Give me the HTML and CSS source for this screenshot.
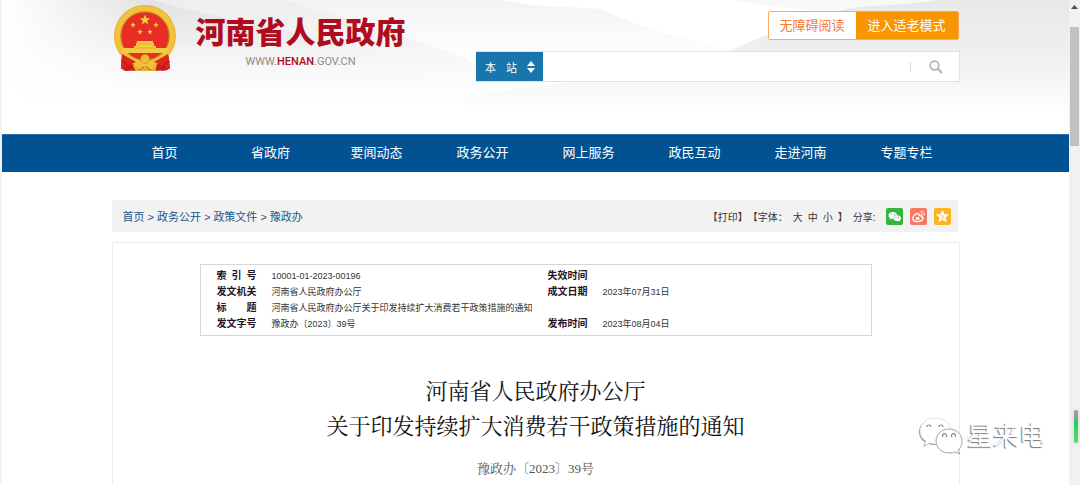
FILE: index.html
```html
<!DOCTYPE html>
<html lang="zh-CN">
<head>
<meta charset="utf-8">
<title>河南省人民政府</title>
<link rel="stylesheet" href="styles.css">
</head>
<body>
<div class="window">
<div class="page">
  <header class="header">
    <svg class="waves" viewBox="0 0 1067 134" preserveAspectRatio="none" aria-hidden="true">
      <defs>
        <linearGradient id="g1" gradientUnits="userSpaceOnUse" x1="180" y1="0" x2="180" y2="95"><stop offset="0" stop-color="#e2e2e2"/><stop offset="0.4" stop-color="#eeeeee"/><stop offset="1" stop-color="#fff" stop-opacity="0"/></linearGradient>
        <linearGradient id="g2" gradientUnits="userSpaceOnUse" x1="0" y1="0" x2="0" y2="105"><stop offset="0" stop-color="#ebebeb"/><stop offset="1" stop-color="#fff"/></linearGradient>
        <linearGradient id="g3" gradientUnits="userSpaceOnUse" x1="0" y1="0" x2="0" y2="115"><stop offset="0" stop-color="#e8e8e8"/><stop offset="0.5" stop-color="#f0f0f0"/><stop offset="1" stop-color="#fff"/></linearGradient>
        <linearGradient id="g4" x1="0" y1="0" x2="1" y2="0"><stop offset="0" stop-color="#fff"/><stop offset="0.14" stop-color="#fff" stop-opacity="0"/></linearGradient>
        <linearGradient id="g5" gradientUnits="userSpaceOnUse" x1="0" y1="0" x2="0" y2="60"><stop offset="0" stop-color="#f3f3f3"/><stop offset="1" stop-color="#fff"/></linearGradient>
      </defs>
      <path d="M0 0H1067V134H0Z" fill="url(#g2)" opacity=".35"/>
      <path d="M0 0H285C340 18 400 34 460 56L560 134H0Z" fill="url(#g2)" opacity=".8"/>
      <path d="M0 0H150C210 18 290 28 360 48C410 64 450 84 490 105L0 134Z" fill="url(#g1)"/>
      <path d="M285 0H500C540 8 570 6 600 9C630 18 640 28 690 38L730 50L700 70H490C440 45 350 22 285 0Z" fill="url(#g5)"/>
      <path d="M500 0H730C770 8 810 11 845 11C800 22 770 38 727 50C680 36 650 34 600 9C570 6 540 8 500 0Z" fill="#fff"/>
      <path d="M727 52C780 26 830 8 870 6C910 4 920 2 935 0H1067V134H480L460 100C500 90 530 86 590 81L680 70Z" fill="url(#g3)"/>
      <path d="M0 0H1067V134H0Z" fill="url(#g4)"/>
    </svg>
    <div class="container header-inner">
      <a class="brand" href="#">
        <svg class="emblem" viewBox="0 0 64 68" aria-hidden="true">
          <defs>
            <radialGradient id="gold"><stop offset="0.75" stop-color="#d99a20"/><stop offset="0.88" stop-color="#f8ce4c"/><stop offset="1" stop-color="#e5ab2b"/></radialGradient>
            <path id="star" d="M0-5L1.3-1.6H4.8L2 .6L3 4L0 2L-3 4L-2 .6L-4.8-1.6H-1.3Z"/>
          </defs>
          <path d="M9 46L8 63C12 68 17 65 22 66H43C48 64 52 68 57 63L55 46Z" fill="#cf1d1b"/>
          <circle cx="32" cy="31" r="31" fill="url(#gold)"/>
          <circle cx="32" cy="31" r="27.500" fill="none" stroke="#f3c23d" stroke-width="5" stroke-dasharray="4 1"/>
          <circle cx="32" cy="31" r="24" fill="#e82d24" stroke="#bd7b20" stroke-width="1"/>
          <g fill="#f5cb45">
            <use href="#star" transform="translate(32 15) scale(1.1)"/>
            <use href="#star" transform="translate(20 20) scale(.58)"/><use href="#star" transform="translate(43 20) scale(.58)"/>
            <use href="#star" transform="translate(27 27) scale(.58)"/><use href="#star" transform="translate(37 27) scale(.58)"/>
            <path d="M24 36H40V38H41V41H43V43H55L53 48H11L9 43H21V41H23V38H24Z"/>
          </g>
          <path d="M22 43H42M24 39H40" stroke="#d9a12c" stroke-width=".7"/>
          <path d="M9 49L23 57L8 64ZM55 49L41 57L57 64Z" fill="#df251e"/>
          <path d="M20 61Q32 50 44 61L41 64H36Q32 57 28 64H22Z" fill="#f0bf3c"/>
          <circle cx="32" cy="54" r="4.500" fill="#f1bd36" stroke="#c88c22" stroke-dasharray="2 1"/>
          <path d="M8 56Q13 57 16 63M57 56Q51 58 49 64" fill="none" stroke="#a61217"/>
          <path d="M22 60L27 65L32 61L37 65L43 60V66H22Z" fill="#e4b033"/>
        </svg>
        <span class="brand-text">
          <span class="brand-name">河南省人民政府</span>
          <span class="brand-url">WWW.<b>HENAN</b>.GOV.CN</span>
        </span>
      </a>
      <div class="tools">
        <div class="modes"><button class="mode">无障碍阅读</button><button class="mode mode-on">进入适老模式</button></div>
        <form class="search">
          <button type="button" class="scope"><span>本</span><span>站</span>
            <svg width="8" height="12" viewBox="0 0 8 12" aria-hidden="true"><path d="M4 0L8 5H0ZM0 7H8L4 12Z" fill="#fff"/></svg>
          </button>
          <input class="query" type="text" aria-label="搜索">
          <span class="divider"></span>
          <button type="button" class="go" aria-label="搜索">
            <svg width="14" height="14" viewBox="0 0 14 14" aria-hidden="true"><circle cx="5.500" cy="5.500" r="4.300" fill="none" stroke="#b5b5b5" stroke-width="1.800"/><path d="M8.800 8.800L13 13" stroke="#b5b5b5" stroke-width="2.200"/></svg>
          </button>
        </form>
      </div>
    </div>
  </header>
  <nav class="nav"><div class="container nav-inner">
    <a href="#">首页</a><a href="#">省政府</a><a href="#">要闻动态</a><a href="#">政务公开</a><a href="#">网上服务</a><a href="#">政民互动</a><a href="#">走进河南</a><a href="#">专题专栏</a>
  </div></nav>
  <main class="container">
    <div class="bar">
      <div class="crumbs"><a href="#">首页</a><span>&gt;</span><a href="#">政务公开</a><span>&gt;</span><a href="#">政策文件</a><span>&gt;</span><a href="#">豫政办</a></div>
      <div class="actions">
        <button class="plain">【打印】</button>
        <span class="sizes">【字体：<button class="plain">大</button><button class="plain">中</button><button class="plain">小</button>】</span>
        <span class="share-label">分享:</span>
        <div class="share">
          <a class="wechat" href="#" aria-label="微信"><svg viewBox="0 0 17 17"><path d="M7 4C4.300 4 2.500 5.600 2.500 7.500C2.500 8.600 3.100 9.500 4 10.100L3.600 11.500L5.200 10.700L7 11C7 8.500 8.500 7 11.200 7C10.800 5.200 9.200 4 7 4Z" fill="#fff"/><path d="M11.200 7.200C9 7.200 7.400 8.500 7.400 10.200S9 13.100 11.200 13.100L12.500 12.900L14 13.600L13.600 12.400C14.600 11.900 15 11.200 15 10.200C15 8.500 13.300 7.200 11.200 7.200Z" fill="#fff"/><path d="M5 6.200h1M8 6.200h1M9.400 9.400h1M12 9.400h1" stroke="#31b53c"/></svg></a>
          <a class="weibo" href="#" aria-label="微博"><svg viewBox="0 0 17 17" fill="none" stroke="#fff"><path d="M7.500 5.300C5 6 2.800 8.500 2.800 10.500C2.800 12.600 5 13.600 7.500 13.600C10.500 13.600 13 12 13 10.200C13 9.200 12.200 8.700 11.300 8.500C11.500 7.300 10.500 7 9 7.600C9.200 6 8.800 5.200 7.500 5.300Z" stroke-width="1.300"/><ellipse cx="7.600" cy="10.600" rx="2" ry="1.500" fill="#fff" stroke="none"/><path d="M10.500 3.500C13 3 15 5 14.200 7.600M10.800 5.600C12.200 5.500 12.800 6.400 12.500 7.400"/></svg></a>
          <a class="qzone" href="#" aria-label="QQ空间"><svg viewBox="0 0 17 17"><path d="M8.500 2.500L10.200 6.400L14.500 6.800L11.300 9.600L12.300 13.800L8.500 11.600L4.700 13.800L5.700 9.600L2.500 6.800L6.800 6.400Z" fill="#fff" stroke="#fff" stroke-width=".6"/><path d="M6.800 7.800H10L7.400 10.300H10.400" fill="none" stroke="#fbb51b" stroke-width=".6"/></svg></a>
        </div>
      </div>
    </div>
    <article class="article">
      <table class="meta">
        <colgroup><col class="c-key"><col class="c-wide"><col class="c-key"><col></colgroup>
        <tr><th><span class="key"><i>索</i><i>引</i><i>号</i></span></th><td>10001-01-2023-00196</td><th>失效时间</th><td></td></tr>
        <tr><th>发文机关</th><td>河南省人民政府办公厅</td><th>成文日期</th><td>2023年07月31日</td></tr>
        <tr><th><span class="key"><i>标</i><i>题</i></span></th><td colspan="3">河南省人民政府办公厅关于印发持续扩大消费若干政策措施的通知</td></tr>
        <tr><th>发文字号</th><td>豫政办〔2023〕39号</td><th>发布时间</th><td>2023年08月04日</td></tr>
      </table>
      <h1 class="title">河南省人民政府办公厅<br>关于印发持续扩大消费若干政策措施的通知</h1>
      <p class="docno">豫政办〔2023〕39号</p>
    </article>
  </main>
</div>
<div class="scroll" aria-hidden="true"><svg width="7" height="4" viewBox="0 0 7 4"><path d="M3.500 0L7 4H0Z" fill="#505050"/></svg><div class="thumb"></div></div>
<div class="meter"></div>
<div class="watermark">
  <svg width="44" height="38" viewBox="0 0 44 38" aria-hidden="true">
    <g fill="#999"><path d="M15 1C6 1 0 7 0 14C0 18 2 22 6 24L4 29L10 26Q15 28 21 26L31 12C29 5 23 1 15 1Z"/></g>
    <path d="M16 0C7 0 1 6 1 13C1 18 3 21 7 23L5 28L11 25Q16 27 22 25L32 11C30 4 24 0 16 0Z" fill="#fff" stroke="#bbb" stroke-width=".4"/>
    <path d="M30 11C22 11 17 17 17 23C17 30 23 35 30 35Q34 35 36 34L41 36L39 32C42 30 43 27 43 23C43 17 38 11 30 11Z" fill="#fff" stroke="#999" stroke-width=".9"/>
    <g fill="none" stroke="#888" stroke-width="1.200"><path d="M8 9A2 2 0 1 1 12 9M20 9A2 2 0 1 1 24 9M24 19A2 2 0 1 1 27 19M33 19A2 2 0 1 1 36 19"/></g>
  </svg>
  <span>星来电</span>
</div>
</div>
</body>
</html>
```
FILE: styles.css
```css
* { box-sizing: border-box; }
body { margin: 0; overflow: hidden; background: #fff; color: #333; font-family: "Liberation Sans", "Noto Sans CJK SC", sans-serif; font-size: 11px; }
a { color: inherit; text-decoration: none; }
button { font: inherit; color: inherit; border: 0; padding: 0; background: none; cursor: pointer; }
.window { position: relative; display: flex; height: 100vh; overflow: hidden; }
.page { flex: 1; border-left: 2px solid #f3f3f3; }
.container { max-width: 848px; margin: 0 auto; }
.header { position: relative; height: 134px; }
.waves { position: absolute; inset: 0; width: 100%; height: 100%; }
.header-inner { position: relative; display: flex; justify-content: space-between; }
.brand { display: flex; gap: 19px; padding: 5px 0 0 1px; }
.emblem { width: 64px; height: 68px; }
.brand-text { display: flex; flex-direction: column; align-items: center; padding-top: 8px; }
.brand-name { font-size: 30px; line-height: 40px; font-weight: 900; color: #b00c20; }
.brand-url { font-family: Roboto, sans-serif; font-size: 11px; line-height: 18px; color: #8c8c8c; }
.brand-url b { font-weight: 500; color: #b00c20; }
.tools { width: 484px; padding-top: 11px; display: flex; flex-direction: column; gap: 11px; }
.modes { display: flex; align-self: flex-end; margin-right: 1px; height: 29px; border: 1px solid #fba95c; border-radius: 2px; overflow: hidden; font-size: 13px; line-height: 20px; }
.mode { width: 87px; background: #fff; color: #f47a35; }
.mode-on { width: 102px; background: #f99500; color: #fff; }
.search { display: flex; align-items: center; height: 31px; border: 1px solid #e1e1e1; border-left: 0; background: #fff; }
.scope { display: flex; align-items: center; justify-content: center; gap: 10px; width: 67px; height: 100%; padding-left: 2px; background: #1876ac; color: #fff; }
.query { flex: 1; min-width: 0; height: 100%; border: 0; outline: 0; background: none; font: inherit; padding: 0 10px; }
.divider { width: 1px; height: 10px; background: #d8d8d8; }
.go { width: 48px; height: 100%; padding-left: 2px; display: flex; align-items: center; justify-content: center; }
.nav { background: #005293; border-top: 1px solid #2e70a6; color: #fff; font-size: 13px; line-height: 36px; padding-bottom: 1px; }
.nav-inner { display: flex; }
.nav-inner a { flex: 1; text-align: center; }
.bar { display: flex; align-items: center; justify-content: space-between; height: 32px; margin: 28px 2px 10px 0; padding: 0 7px 0 11px; background: #f2f2f2; }
.crumbs { display: flex; align-items: baseline; gap: 3px; color: #1c5688; }
.actions { display: flex; align-items: center; font-size: 10px; }
.sizes { display: flex; gap: 5px; }
.share-label { margin: 0 10px 0 5px; }
.share { display: flex; gap: 7px; }
.share a { width: 17px; height: 17px; border-radius: 2px; }
.share svg { display: block; }
.wechat { background: #31b53c; }
.weibo { background: #f57b69; }
.qzone { background: #fbb51b; }
.article { border: 1px solid #ececec; border-bottom: 0; padding: 21px 87px 0; }
.article::after { content: ""; display: block; height: 100px; }
.meta { width: 100%; table-layout: fixed; border: 1px solid #d6d6d6; border-spacing: 0; padding: 3px 0 3px 16px; font-size: 9px; line-height: 14px; }
.meta th, .meta td { padding: 0 0 0 1px; text-align: left; height: 16px; white-space: nowrap; }
.meta th { padding: 0; color: #241424; font-size: 10px; }
.c-key { width: 54px; }
.c-wide { width: 277px; }
.key { display: flex; justify-content: space-between; width: 40px; }
.key i { font-style: normal; }
.title { margin: 38px 0 0; text-align: center; color: #111; font: 400 22px/35px "Liberation Serif", "Noto Serif CJK SC", "Noto Sans CJK SC", serif; }
.docno { margin: 16px 0 0; text-align: center; color: #555; font: 13px/18px "Liberation Serif", "Noto Serif CJK SC", "Noto Sans CJK SC", serif; }
.scroll { width: 11px; background: #f1f1f1; display: flex; flex-direction: column; align-items: center; padding-top: 5px; gap: 18px; }
.thumb { width: 9px; height: 119px; background: #c1c1c1; }
.meter { position: absolute; right: 2px; top: 410px; width: 4px; height: 33px; border-radius: 2px; background: linear-gradient(#999 30%, #20cc67 30%, #52dd65); box-shadow: 0 0 4px #ccc; }
.watermark { position: absolute; right: 35px; top: 418px; display: flex; gap: 4px; color: #fff; font-size: 26px; line-height: 36px; text-shadow: -1px 1px 1px #777; }
```
